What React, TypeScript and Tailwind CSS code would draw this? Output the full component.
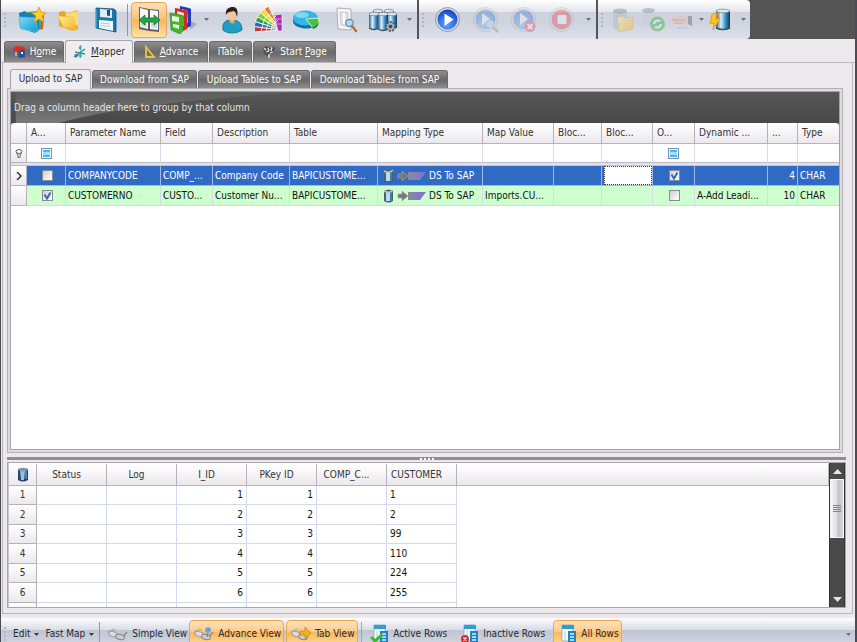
import React from 'react';

type P = { className?: string };

/* ---------- icons ---------- */

const Svg = ({ w = 28, h = 28, className = '', children }: { w?: number; h?: number; className?: string; children: React.ReactNode }) => (
  <svg width={w} height={h} viewBox={`0 0 ${w} ${h}`} className={`block shrink-0 ${className}`} aria-hidden="true">
    {children}
  </svg>
);

const Defs = () => (
  <svg width="0" height="0" className="absolute" aria-hidden="true">
    <defs>
      <linearGradient id="cyan" x1="0" y1="0" x2="1" y2="1">
        <stop offset="0" stopColor="#7be0f8" />
        <stop offset="1" stopColor="#1496cf" />
      </linearGradient>
      <linearGradient id="gold" x1="0" y1="0" x2="1" y2="1">
        <stop offset="0" stopColor="#fff0a0" />
        <stop offset="1" stopColor="#f3b018" />
      </linearGradient>
      <linearGradient id="steel" x1="0" y1="0" x2="1" y2="0">
        <stop offset="0" stopColor="#3b5f80" />
        <stop offset=".35" stopColor="#d8f0fa" />
        <stop offset=".7" stopColor="#2f8cc4" />
        <stop offset="1" stopColor="#14354f" />
      </linearGradient>
      <radialGradient id="ball" cx=".45" cy=".75" r=".7">
        <stop offset="0" stopColor="#5fa5ff" />
        <stop offset="1" stopColor="#164cc8" />
      </radialGradient>
      <linearGradient id="ramp" x1="0" y1="0" x2="1" y2="0">
        <stop offset="0" stopColor="#8c8a93" />
        <stop offset="1" stopColor="#7b70e0" />
      </linearGradient>
      <linearGradient id="shine" x1="0" y1="0" x2="0" y2="1">
        <stop offset="0" stopColor="#8a8a8a" stopOpacity=".15" />
        <stop offset="1" stopColor="#8a8a8a" stopOpacity=".75" />
      </linearGradient>
    </defs>
  </svg>
);

const NewFolder = () => (
  <Svg>
    <path d="M9 7l15-1 2 3-1 14-8 2z" fill="#d9542b" />
    <path d="M8 6l14-1 2 4-1 14-8 3z" fill="#5aa83a" />
    <path d="M1 7l6-2 2 2 12 1v15l-4 4L2 22z" fill="#1b7fb5" />
    <path d="M1 11l17 1 2 14-17-3z" fill="url(#cyan)" stroke="#58c4ea" strokeWidth=".7" />
    <path d="M21 1l2 5 5 1-4 3 2 6-5-3-5 3 2-6-4-3 5-1z" fill="#ffcf2e" stroke="#e99a10" strokeWidth=".8" />
  </Svg>
);
const Folder = () => (
  <Svg>
    <path d="M4 6l5-1 3 3 10-4 1 4v15l-5 2L4 20z" fill="#eda41f" />
    <path d="M10 8l13-3v14l-6 2z" fill="#fbdc6c" />
    <path d="M3 10l15 1 4 13-14-3z" fill="url(#gold)" stroke="#f0bd3a" strokeWidth=".7" />
  </Svg>
);
const Save = () => (
  <Svg>
    <path d="M4 2l18 1 2 2v21L4 22z" fill="#1878a8" stroke="#0e4f78" strokeWidth=".8" />
    <path d="M8 3l12 1v8L8 11z" fill="#dfeef5" />
    <path d="M15 4h3v6l-3-.5z" fill="#1c4f74" />
    <path d="M7 14l14 1v10L7 22z" fill="#f4f8fa" />
    <path d="M9 17l9 1M9 19.500l9 1" stroke="#a8b8c2" strokeWidth=".8" />
    <path d="M4 3v19" stroke="#67c5e5" strokeWidth="1" />
  </Svg>
);
const MapIcon = () => (
  <Svg>
    <path d="M4 1l10 2 10 1v22l-10-1-10-2z" fill="#5b6268" />
    <path d="M5 2l8 2v19l-8-2zM15 4l8 1v19l-8-1z" fill="#f6f7f7" />
    <path d="M6 15l6-2v8l-6-1zM16 14l6-2v10l-6-1z" fill="#cfd6d8" />
    <path d="M4 14l6-5v3h9V9l6 5-6 5v-3h-9v3z" fill="#27a544" stroke="#0d6b25" strokeWidth=".7" />
  </Svg>
);
const Books = () => (
  <Svg w={30}>
    <path d="M22 24l7-6-6-3z" fill="#8a93a5" opacity=".6" />
    <path d="M12 0l9 2 2 1v17l-4 2-8-4z" fill="#2438c8" />
    <path d="M14 3l6 2v12l-5-2z" fill="#e8ecfa" />
    <path d="M7 2l10 2 3 1-1 18-4 2-8-4z" fill="#d42b22" />
    <path d="M9 5l7 2v13l-6-2z" fill="#fbe6e2" />
    <path d="M2 7l11 2 3 1-1 15-3 3L3 24z" fill="#45b52b" stroke="#23791a" strokeWidth=".5" />
    <path d="M4 10l7 1v5l-7-1zM5 18l6 1v4l-6-2z" fill="#eafbe3" />
  </Svg>
);
const Person = () => (
  <Svg>
    <path d="M5 24c-1-8 3-10 8-10s11 1 11 10c-5 4-15 4-19 0z" fill="#1f9ec4" stroke="#0b6d91" strokeWidth=".8" />
    <path d="M11 13h6l-1 5-4-1z" fill="#e6a06a" />
    <ellipse cx="14" cy="8.500" rx="4.500" ry="6.500" fill="#f6c499" />
    <path d="M8 9C7 3 11 1 15 1c5 0 5 6 4 10-1-3-1-5-3-6-3 1-6 0-8 4z" fill="#27201c" />
  </Svg>
);

const fan = ['#c8372c', '#ea7a2c', '#f2d936', '#8acb35', '#2f9c52', '#2a62c0'];
const pivot = (r: number, deg: number) => {
  const a = (deg * Math.PI) / 180;
  return `${(26 + r * Math.cos(a)).toFixed(1)} ${(24 - r * Math.sin(a)).toFixed(1)}`;
};
const Palette = () => (
  <Svg>
    {fan.map((c, i) => {
      const a = 118 + i * 11;
      return (
        <path key={c} d={`M${pivot(4, a)}L${pivot(27, a)}L${pivot(27, a + 11)}L${pivot(4, a + 11)}z`} fill={fan[(i + 1) % 6]} stroke="#fff" strokeWidth=".8" />
      );
    })}
    <path d="M19 9l8-1v17h-4z" fill="#a42fb0" stroke="#fff" strokeWidth=".6" />
    {[10, 15, 20].map((r) => (
      <path key={r} d={`M${pivot(r, 108)}L${pivot(r, 146)}L${pivot(r, 184)}`} stroke="#fff" strokeWidth=".9" fill="none" opacity=".85" />
    ))}
    <path d="M19 13h8M20 18h7" stroke="#e8b5ee" strokeWidth=".8" />
  </Svg>
);
const Pie = () => (
  <Svg>
    <path d="M1 12v4c2 8 22 9 25 1v-4z" fill="#0e73a8" />
    <ellipse cx="13.500" cy="12" rx="12.500" ry="7.500" fill="#35b5e6" />
    <ellipse cx="10" cy="9" rx="7" ry="3" fill="#9be4fa" opacity=".7" />
    <path d="M14 13l12-1c2 4-1 8-6 9z" fill="#41c63c" stroke="#eafbe8" strokeWidth=".8" />
    <path d="M20 21c4-1 7-4 6.500-8v4c0 3-2 5-5.500 6z" fill="#1f8a25" />
  </Svg>
);
const DocSearch = () => (
  <Svg>
    <path d="M5 2l14 1v21L6 23z" fill="#f5f6f7" stroke="#a4a9ae" strokeWidth=".9" />
    <path d="M8 6l8 .5v14L9 19z" fill="#dfe2e5" stroke="#b9bec2" strokeWidth=".7" />
    <path d="M12 7v11" stroke="#fff" strokeWidth="2" />
    <circle cx="17.500" cy="17" r="3.700" fill="#a8d8f3" stroke="#6f8797" strokeWidth="1.200" />
    <path d="M20 20l4 5" stroke="#b5713a" strokeWidth="2.400" strokeLinecap="round" />
  </Svg>
);
const Can = ({ x, y, w, h }: { x: number; y: number; w: number; h: number }) => (
  <g>
    <rect x={x} y={y} width={w} height={h} rx="1.500" fill="url(#steel)" />
    <ellipse cx={x + w / 2} cy={y + 1} rx={w / 2} ry="1.800" fill="#dbe7ee" stroke="#5f7180" strokeWidth=".6" />
    <path d={`M${x} ${y + h - 1}q${w / 2} 3 ${w} 0`} stroke="#3c5165" strokeWidth="1.400" fill="none" />
  </g>
);
const Databases = () => (
  <Svg w={30}>
    <Can x={5} y={4} w={10} h={12} />
    <Can x={16} y={4} w={10} h={12} />
    <Can x={19} y={7} w={10} h={15} />
    <Can x={1} y={7} w={10} h={16} />
    <Can x={10} y={7} w={10} h={17} />
    <circle cx="22.500" cy="20.500" r="4.500" fill="#aab3b9" stroke="#4f5a61" strokeWidth="2" strokeDasharray="2 1.300" />
    <circle cx="22.500" cy="20.500" r="1.800" fill="#3c464d" />
  </Svg>
);
const Ring = ({ children, fill = 'url(#ball)' }: { children: React.ReactNode; fill?: string }) => (
  <>
    <circle cx="13.500" cy="13.500" r="12" fill="#d6d8de" stroke="#858b99" strokeWidth=".8" />
    <circle cx="13.500" cy="13.500" r="10" fill={fill} />
    {children}
  </>
);
const Play = () => (
  <Svg><Ring><path d="M10.500 7.500l9 6-9 6.500z" fill="#fff" /></Ring></Svg>
);
const PlaySearch = () => (
  <Svg className="opacity-30">
    <Ring><path d="M10 7l8 6-8 6z" fill="#fff" /></Ring>
    <circle cx="18" cy="18" r="4" fill="#9fdcf5" stroke="#5b9cb8" />
    <path d="M21 21l5 5" stroke="#b0683a" strokeWidth="2.500" />
  </Svg>
);
const PlayStop = () => (
  <Svg className="opacity-30">
    <Ring><path d="M10 7l8 6-8 6z" fill="#fff" /></Ring>
    <circle cx="20" cy="20.500" r="5.500" fill="#e51c2b" />
    <path d="M17.500 18l5 5m0-5l-5 5" stroke="#fff" strokeWidth="1.800" />
  </Svg>
);
const Stop = () => (
  <Svg className="opacity-30">
    <Ring fill="#e0242c"><rect x="9.500" y="9" width="9" height="9" rx="1" fill="#fff" /></Ring>
  </Svg>
);
const DimFolder = () => (
  <Svg className="opacity-45">
    <path d="M4 5l9-2 5 2v18l-8 2-6-3z" fill="#9cc0cf" />
    <ellipse cx="11" cy="5" rx="7" ry="2.500" fill="#7e8b95" />
    <path d="M8 11l6-1 2 2 8-1v12l-14 3z" fill="url(#gold)" stroke="#d9a63a" strokeWidth=".7" />
  </Svg>
);
const DimRefresh = () => (
  <Svg className="opacity-40">
    <rect x="4" y="4" width="11" height="16" rx="2" fill="#c3ccd8" />
    <ellipse cx="9.500" cy="4.500" rx="6.500" ry="2.500" fill="#77808c" />
    <circle cx="18.500" cy="18" r="7.500" fill="#2fae3c" />
    <path d="M15 18a4 4 0 016-3m1 3a4 4 0 01-6 3" stroke="#fff" strokeWidth="2" fill="none" />
  </Svg>
);
const DimHand = () => (
  <Svg className="opacity-40">
    <path d="M4 10h8l10 1v7l-9 1-8-2-1-3z" fill="#efbfa5" />
    <path d="M4 14h13M6 17h9" stroke="#a3705a" strokeWidth=".9" />
    <path d="M20 10h4v10l-4-2z" fill="#505a68" />
    <path d="M9 22h10" stroke="#9aa2b0" />
  </Svg>
);
const BoltDb = () => (
  <Svg>
    <Can x={9} y={4} w={14} h={19} />
    <path d="M5 8l5-1-1 6 4-1-7 12 1-7-4 1z" fill="#ffc326" stroke="#ef8f12" strokeWidth=".8" />
  </Svg>
);

const HomeIcon = () => (
  <Svg w={14} h={14}>
    <path d="M1 5l5-3 2 2v8l-6-1z" fill="#3a6cc4" />
    <path d="M6 5l5-1 2 3v5l-6 1z" fill="#2a4d9c" />
    <path d="M0 5l4-4 8 1 2 5-4-3-4 3z" fill="#dc2c20" />
    <path d="M3 7h2v4H3z" fill="#f4a434" />
    <path d="M9 7h2v2H9z" fill="#e8eefa" />
  </Svg>
);
const MapperIcon = () => (
  <Svg w={14} h={14}>
    <path d="M8 0c2 4-2 7 0 9s0 4-1 4c-3-3 2-6 0-8s-1-4 1-5z" fill="#39a4d8" />
    <path d="M1 12L12 4M2 7l10 2" stroke="#2b9c6a" strokeWidth="1.500" />
    <path d="M1 9l5 1-3 3z" fill="#3b6fc4" />
  </Svg>
);
const RulerIcon = () => (
  <Svg w={12} h={14}>
    <path d="M2 2v10h8z" fill="none" stroke="#f2c03c" strokeWidth="1.800" />
  </Svg>
);
const FlagIcon = () => (
  <Svg w={14} h={14}>
    <path d="M1 3l3-2 3 2 4-2 2 2-2 6-3-1-3 3-3-3z" fill="#4f4f4f" />
    <path d="M2 3l2 2M6 3l1 3M10 2l-1 4M4 7l3-1M8 8l3-1M7 9v4" stroke="#e8e8e8" strokeWidth="1.300" />
  </Svg>
);
const Glasses = ({ accent }: { accent?: 'pin' | 'arrow' }) => (
  <Svg w={22} h={16}>
    <path d="M1 6l6-3 2 2" stroke="#a6a6a6" fill="none" />
    <path d="M20 6l-4 5" stroke="#8f8f8f" strokeWidth="1.500" />
    <ellipse cx="6" cy="8" rx="4.500" ry="2.500" fill="#dcdce0" stroke="#949494" transform="rotate(20 6 8)" />
    <ellipse cx="13" cy="11" rx="4.500" ry="2.500" fill="#c9ccd2" stroke="#858585" transform="rotate(15 13 11)" />
    {accent === 'pin' && <><circle cx="15" cy="4" r="2.800" fill="#5ea3e6" /><path d="M15 7l-1 4" stroke="#5d7fa8" /></>}
    {accent === 'arrow' && <path d="M10 5h5V1l6 6-6 6V9h-5z" fill="#eeb01e" stroke="#b97d0c" strokeWidth=".6" />}
  </Svg>
);
const RowsIcon = ({ mark }: { mark?: 'check' | 'cross' }) => (
  <Svg w={20} h={22}>
    <path d="M4 2h11v16H4z" fill="#f6fafc" stroke="#8ea6b8" strokeWidth=".8" />
    <path d="M4 2h12v4H4z" fill="#2a9fd6" />
    <path d="M7 8v10" stroke="#b9cad4" />
    <path d="M10 8h8v13h-8z" fill="#1b86c4" />
    <path d="M12 11h4M12 14h4M12 17h4" stroke="#d6effb" strokeWidth="1.300" />
    {mark === 'check' && <path d="M1 14l4 4 7-6" stroke="#3cba2c" strokeWidth="3" fill="none" />}
    {mark === 'cross' && <><circle cx="5" cy="16" r="4" fill="#d92a2a" /><path d="M3.500 14.500l3 3m0-3l-3 3" stroke="#fff" strokeWidth="1.200" /></>}
  </Svg>
);
const DbSmall = () => (
  <Svg w={12} h={15}>
    <path d="M1 2h10v11q-5 3-10 0z" fill="#2f3f66" />
    <path d="M3 4h5l-1 9H4z" fill="#86c6ea" />
    <path d="M8 4h2v8H8z" fill="#5a7cb2" />
    <ellipse cx="6" cy="2.500" rx="5" ry="1.800" fill="#8590ac" />
  </Svg>
);
const MappingIcon = () => (
  <Svg w={43} h={15}>
    <path d="M1 3q5-3 9 0v10q-4 3-9 0z" fill="#4c6070" />
    <path d="M3 4h4v9H3z" fill="#b5dcf0" />
    <path d="M7 4h2v9H7z" fill="#3f7fae" />
    <path d="M1 3q5 3 9-1" stroke="#b8c2c8" fill="none" strokeWidth="1.500" />
    <path d="M15 6h4V3l6 5-6 5v-3h-4z" fill="#77777d" stroke="#a4a4ac" strokeWidth=".6" />
    <path d="M25 4h18l-6 8H25z" fill="url(#ramp)" />
  </Svg>
);
const Funnel = () => (
  <Svg w={8} h={9}>
    <ellipse cx="4" cy="2.500" rx="3" ry="2" fill="none" stroke="#666" />
    <path d="M1.500 4l1.500 2v3h2V6l1.500-2" fill="none" stroke="#666" />
  </Svg>
);
const Arrow = ({ className = 'text-[#3a3a3a]' }: P) => (
  <Svg w={5} h={3} className={className}><path d="M0 0h5L2.500 3z" fill="currentColor" /></Svg>
);

/* ---------- pieces ---------- */

const Grip = ({ className = '' }: P) => (
  <span className={`flex shrink-0 flex-col justify-center gap-[2px] ${className}`}>
    {[0, 1, 2, 3].map((i) => <i key={i} className="block size-[2px] bg-[#b3b7c3]" />)}
  </span>
);

const Tool = ({ label, children, className = 'w-[37px]' }: { label: string; children: React.ReactNode; className?: string }) => (
  <button type="button" aria-label={label} className={`flex h-[37px] shrink-0 items-center justify-center ${className}`}>{children}</button>
);

const More = ({ label, className = '' }: { label: string; className?: string }) => (
  <button type="button" aria-label={label} className={`flex h-[37px] shrink-0 items-center justify-center ${className}`}>
    <Arrow className="text-[#6c7387]" />
  </button>
);

const bar = 'bg-[linear-gradient(#ffffff_0,#e4e5ec_12px,#cdd2dd_12px,#cfd4df_60%,#dde1ea_100%)]';

function Toolbar() {
  return (
    <div className="flex h-[39px] shrink-0 bg-[#545454]">
      <div className={`flex rounded-r-sm ${bar}`}>
        <div className="flex items-center">
          <Grip className="w-3 pl-[3px]" />
          <Tool label="New"><NewFolder /></Tool>
          <Tool label="Open"><Folder /></Tool>
          <Tool label="Save"><Save /></Tool>
          <i className="mx-[3px] block h-8 w-px bg-[#8f94a1]" />
          <button type="button" aria-label="Mapping" className="flex h-9 w-9 shrink-0 items-center justify-center rounded-sm border border-[#eda353] bg-[linear-gradient(#fde0b4,#f9c37c_45%,#fbb45a_50%,#ffe3a8)]"><MapIcon /></button>
          <Tool label="Library" className="w-8"><Books /></Tool>
          <More label="Library options" className="w-3.5" />
          <Tool label="User"><Person /></Tool>
          <Tool label="Colours"><Palette /></Tool>
          <Tool label="Chart"><Pie /></Tool>
          <Tool label="Preview" className="w-10 pl-1"><DocSearch /></Tool>
          <Tool label="Data sources"><Databases /></Tool>
          <More label="More" className="w-4" />
        </div>
        <i className="block h-full w-[2px] bg-[#555559]" />
        <div className="flex items-center">
          <Grip className="w-2.5 pl-[3px]" />
          <Tool label="Run" className="w-[38px]"><Play /></Tool>
          <Tool label="Inspect run" className="w-[38px]"><PlaySearch /></Tool>
          <Tool label="Cancel run" className="w-[38px]"><PlayStop /></Tool>
          <Tool label="Stop" className="w-[38px]"><Stop /></Tool>
          <More label="Run options" className="w-[15px]" />
        </div>
        <i className="block h-full w-[2px] bg-[#555559]" />
        <div className="flex items-center">
          <Grip className="w-2.5 pl-[3px]" />
          <Tool label="Open data" className="w-[30px]"><DimFolder /></Tool>
          <Tool label="Refresh data" className="w-[30px]"><DimRefresh /></Tool>
          <Tool label="Share" className="w-7"><DimHand /></Tool>
          <More label="Share options" className="w-2.5" />
          <Tool label="Connect" className="w-[30px]"><BoltDb /></Tool>
          <More label="More data actions" className="w-[14px]" />
        </div>
      </div>
    </div>
  );
}

function Tab({ active, sub, children, className = '' }: { active?: boolean; sub?: boolean; children: React.ReactNode; className?: string }) {
  const size = sub ? 'h-[18px]' : 'h-[21px]';
  const look = active
    ? 'z-10 -mb-px border-[#a5a3a8] bg-[#f0edf1] text-[#2f2f2f] ' + (sub ? 'pb-px h-5' : 'pb-px h-[23px]')
    : `border-[#6b6b6b] bg-[linear-gradient(#8d8d8d,#6a6a6a_50%,#6d6d6d_60%,#8e8e8e)] text-white ${size}`;
  return (
    <button type="button" role="tab" aria-selected={!!active} className={`relative flex shrink-0 items-center justify-center gap-1 whitespace-nowrap rounded-t-[3px] border border-b-0 ${look} ${className}`}>
      {children}
    </button>
  );
}

function Check({ label, checked, filter }: { label: string; checked?: boolean; filter?: boolean }) {
  return (
    <span className="relative mx-auto block size-[11px]">
      <input type="checkbox" aria-label={label} defaultChecked={checked}
        className={`peer block size-[11px] appearance-none border ${filter ? 'border-[#6f93b5] bg-[#eef8ff]' : 'border-[#8a8a94] bg-[linear-gradient(135deg,#cfcfd4,#ffffff)]'}`} />
      {filter ? (
        <i className="pointer-events-none absolute inset-[2px] block border-y-2 border-[#4cb4f0] bg-[#a5dcfa]" />
      ) : (
        <svg viewBox="0 0 11 11" className="pointer-events-none absolute inset-0 hidden size-[11px] peer-checked:block" aria-hidden="true">
          <path d="M2.500 4.500l2.500 4 3.500-6" stroke="#2f6cc0" strokeWidth="2" fill="none" />
        </svg>
      )}
    </span>
  );
}

const cols: { name: string; w: string }[] = [
  { name: 'A...', w: 'w-[39px]' },
  { name: 'Parameter Name', w: 'w-[95px]' },
  { name: 'Field', w: 'w-[52px]' },
  { name: 'Description', w: 'w-[77px]' },
  { name: 'Table', w: 'w-[88px]' },
  { name: 'Mapping Type', w: 'w-[105px]' },
  { name: 'Map Value', w: 'w-[71px]' },
  { name: 'Bloc...', w: 'w-[48px]' },
  { name: 'Bloc...', w: 'w-[51px]' },
  { name: 'O...', w: 'w-[42px]' },
  { name: 'Dynamic ...', w: 'w-[73px]' },
  { name: '...', w: 'w-[30px]' },
  { name: 'Type', w: '' },
];

const head = 'bg-[linear-gradient(#ffffff,#ece8ed)] border-r border-b border-[#b5b2b8] font-normal text-[#333]';

const mapRows = [
  { on: false, name: 'COMPANYCODE', field: 'COMP_...', desc: 'Company Code', table: 'BAPICUSTOME...', value: '', opt: true, dyn: '', len: 4, type: 'CHAR' },
  { on: true, name: 'CUSTOMERNO', field: 'CUSTO...', desc: 'Customer Nu...', table: 'BAPICUSTOME...', value: 'Imports.CU...', opt: false, dyn: 'A-Add Leadi...', len: 10, type: 'CHAR' },
];

function MappingTable() {
  return (
    <table className="w-full table-fixed border-separate border-spacing-0">
      <colgroup>
        <col className="w-4" />
        {cols.map((c, i) => <col key={i} className={c.w} />)}
      </colgroup>
      <thead>
        <tr className="h-[21px]">
          <th className={`${head} rounded-tl-[3px]`} />
          {cols.map((c, i) => (
            <th key={i} className={`${head} overflow-hidden whitespace-nowrap pl-1 text-left last:rounded-tr-[3px] last:border-r-0`}>{c.name}</th>
          ))}
        </tr>
      </thead>
      <tbody>
        <tr className="h-[19px]">
          <td className={`${head} py-0`}><span className="flex justify-center"><Funnel /></span></td>
          {cols.map((c, i) => (
            <td key={i} className="border-r border-b border-[#d9dcea] border-b-[#bab8c4] bg-white py-0 last:border-r-0">
              {(i === 0 || i === 9) && <Check filter label={`Filter ${c.name}`} />}
            </td>
          ))}
        </tr>
        <tr className="h-[3px]"><td colSpan={14} className="border-b border-[#c3c1ca] bg-[#e3e1e9] p-0" /></tr>
        {mapRows.map((r, n) => {
          const cell = `overflow-hidden whitespace-nowrap border-r border-b py-0 pl-[2px] last:border-r-0 ${n === 0 ? 'border-[#9db8e6] border-b-[#9db8e6] bg-[#316ac5] text-white' : 'border-[#d5dbe4] bg-[#ceffce] text-[#111]'}`;
          return (
            <tr key={r.name} className="h-5">
              <td className={`${head} py-0`}>
                {n === 0 && <Svg w={6} h={8} className="mx-auto"><path d="M1 0l4 4-4 4" stroke="#333" strokeWidth="1.500" fill="none" /></Svg>}
              </td>
              <td className={cell}><Check label={`Active ${r.name}`} checked={r.on} /></td>
              <td className={cell}>{r.name}</td>
              <td className={cell}>{r.field}</td>
              <td className={cell}>{r.desc}</td>
              <td className={cell}>{r.table}</td>
              <td className={cell}><span className="flex items-center gap-[3px] pl-[3px]"><MappingIcon />DS To SAP</span></td>
              <td className={cell}>{r.value}</td>
              <td className={cell} />
              <td className={`${cell} pr-0 pl-0`}>
                {n === 0 && <input type="text" aria-label="Block value" className="block h-[19px] w-full border border-dotted border-[#333] bg-white px-1 text-[#111] outline-none" />}
              </td>
              <td className={cell}><Check label={`Optional ${r.name}`} checked={r.opt} /></td>
              <td className={cell}>{r.dyn}</td>
              <td className={`${cell} pr-[2px] text-right`}>{r.len}</td>
              <td className={cell}>{r.type}</td>
            </tr>
          );
        })}
      </tbody>
    </table>
  );
}

const dataRows: [number, string][] = [[1, '1'], [2, '2'], [3, '99'], [4, '110'], [5, '224'], [6, '255']];

function DataTable() {
  const cell = 'border-r border-b border-[#d3d9ec] py-0 px-[3px] text-[#111]';
  return (
    <table className="w-full table-fixed border-separate border-spacing-0">
      <colgroup>
        <col className="w-7" />
        {[0, 1, 2, 3, 4, 5].map((i) => <col key={i} className="w-[70px]" />)}
        <col />
      </colgroup>
      <thead>
        <tr className="h-[22px]">
          <th className={`${head} py-0`}><span className="flex justify-center"><DbSmall /></span></th>
          {['Status', 'Log', 'I_ID', 'PKey ID', 'COMP_C...', 'CUSTOMER'].map((h) => (
            <th key={h} className={`${head} whitespace-nowrap py-0 pr-2.5 pl-0 text-center`}>{h}</th>
          ))}
          <th className={head} />
        </tr>
      </thead>
      <tbody>
        {dataRows.map(([n, c]) => (
          <tr key={n} className="odd:h-[19px] even:h-5">
            <th className={`${head} py-0`}>{n}</th>
            <td className={cell} />
            <td className={cell} />
            <td className={`${cell} text-right`}>{n}</td>
            <td className={`${cell} text-right`}>{n}</td>
            <td className={cell} />
            <td className={cell}>{c}</td>
            <td />
          </tr>
        ))}
        <tr className="h-5">
          <th className={head} />
          {[0, 1, 2, 3, 4, 5].map((i) => <td key={i} className={cell} />)}
          <td />
        </tr>
      </tbody>
    </table>
  );
}

function ScrollBar() {
  return (
    <div className="flex w-4 shrink-0 flex-col border-x border-[#30353b] bg-[#4a4a4a]">
      <button type="button" aria-label="Scroll up" className="flex h-4 items-center justify-center">
        <Svg w={9} h={5}><path d="M0 5h9L4.500 0z" fill="#e6e6e6" /></Svg>
      </button>
      <div className="flex h-[59px] flex-col items-center justify-center gap-px border border-[#f6f6f8] bg-[linear-gradient(90deg,#f5f4f7,#dcdade_50%,#c4c2c9_60%,#d8d6dc)]">
        {[0, 1, 2, 3].map((i) => <i key={i} className="block h-px w-2 bg-[#85838a]" />)}
      </div>
      <button type="button" aria-label="Scroll down" className="mt-auto flex h-4 items-center justify-center">
        <Svg w={9} h={5}><path d="M0 0h9L4.500 5z" fill="#e6e6e6" /></Svg>
      </button>
    </div>
  );
}

function BottomButton({ on, icon, children, className = '' }: { on?: boolean; icon: React.ReactNode; children: React.ReactNode; className?: string }) {
  return (
    <button type="button" aria-pressed={!!on}
      className={`flex h-7 shrink-0 items-center gap-[3px] whitespace-nowrap rounded-sm border ${on ? 'border-[#f0a54c] bg-[linear-gradient(#fee3bd,#fccb8a_40%,#fdb75d_45%,#ffdf9e)]' : 'border-transparent'} ${className}`}>
      {icon}{children}
    </button>
  );
}

function BottomBar() {
  return (
    <div className="h-6 shrink-0 overflow-hidden bg-[linear-gradient(#fdfdfe_0,#dadce5_12px,#bfc5d2_12px,#ced3de_24px)] pt-[2px] text-[#262a33]">
      <div className="flex h-7 items-center">
        <Grip className="w-[9px] pl-[3px]" />
        <button type="button" className="flex items-center gap-1 px-[3px]">Edit<Arrow /></button>
        <button type="button" className="flex items-center gap-1 px-[3px]">Fast Map<Arrow /></button>
        <i className="mx-[2px] block h-6 w-px shrink-0 bg-[#9398a5]" />
        <BottomButton icon={<Glasses />} className="w-[87px] pl-1">Simple View</BottomButton>
        <BottomButton on icon={<Glasses accent="pin" />} className="w-[95px] pl-[3px]">Advance View</BottomButton>
        <BottomButton on icon={<Glasses accent="arrow" />} className="ml-[2px] w-[72px] pl-[3px]">Tab View</BottomButton>
        <i className="mx-[3px] block h-6 w-px shrink-0 bg-[#9fa4b0]" />
        <BottomButton icon={<RowsIcon mark="check" />} className="w-[90px] pl-1">Active Rows</BottomButton>
        <BottomButton icon={<RowsIcon mark="cross" />} className="w-[98px] pl-1">Inactive Rows</BottomButton>
        <BottomButton on icon={<RowsIcon />} className="w-[69px] pl-1">All Rows</BottomButton>
        <button type="button" aria-label="Toolbar options" className="ml-auto px-1"><Arrow className="text-[#6c7387]" /></button>
      </div>
    </div>
  );
}

export default function App() {
  return (
    <div className="flex h-screen flex-col overflow-hidden border-r-2 border-l border-[#4c4b54] bg-[#ece8ec] font-['DejaVu_Sans_Condensed','DejaVu_Sans',sans-serif] text-[10px] leading-3">
      <Defs />
      <Toolbar />
      <div role="tablist" aria-label="Workspace" className="mt-px flex shrink-0 items-end gap-px border-b border-[#b9b6bc] px-[3px]">
        <Tab className="w-[60px]"><HomeIcon /><span>H<u>o</u>me</span></Tab>
        <Tab active className="w-[68px]"><MapperIcon /><span><u>M</u>apper</span></Tab>
        <Tab className="w-[74px]"><RulerIcon /><span><u>A</u>dvance</span></Tab>
        <Tab className="w-[43px]">iTable</Tab>
        <Tab className="w-[83px]"><FlagIcon /><span>Start <u>P</u>age</span></Tab>
      </div>
      <main className="mr-[2px] mb-1 ml-px flex min-h-0 flex-1 flex-col border-x border-b border-[#b9b6bc] pt-1.5 pr-1.5 pb-[5px] pl-1">
        <div role="tablist" aria-label="Transfer" className="flex shrink-0 items-end gap-px px-[3px]">
          <Tab sub active className="w-[81px]">Upload to SAP</Tab>
          <Tab sub className="w-[105px]">Download from SAP</Tab>
          <Tab sub className="w-[112px]">Upload Tables to SAP</Tab>
          <Tab sub className="w-[137px]">Download Tables from SAP</Tab>
        </div>
        <section className="mr-[3px] flex min-h-0 flex-1 flex-col border border-[#b3b1b6] bg-[#dddbdf] p-[2px]">
          <div className="flex min-h-0 flex-1 flex-col border border-[#a5a3a8] bg-white">
            <div className="relative flex h-[31px] shrink-0 items-center bg-[linear-gradient(#565656,#484848)] px-[3px] text-[#e6e6e6]">
              <svg className="absolute inset-y-0 left-0 h-full w-[300px]" viewBox="0 0 300 32" aria-hidden="true">
                <path d="M0 0h290C190 8 110 14 45 32H0z" fill="url(#shine)" />
              </svg>
              <span className="relative">Drag a column header here to group by that column</span>
            </div>
            <div className="bg-[#484848]"><MappingTable /></div>
          </div>
        </section>
        <div className="mt-1 flex h-[3px] shrink-0 items-center justify-center gap-[2px] bg-[#8f8d92]">
          {[0, 1, 2, 3].map((i) => <i key={i} className="block size-[2px] bg-white" />)}
        </div>
        <section className="mt-[2px] flex h-[146px] shrink-0 overflow-hidden border border-[#a9a7ac] bg-white">
          <div className="min-w-0 flex-1 border-l border-[#c9c7cc] pt-px"><DataTable /></div>
          <ScrollBar />
        </section>
      </main>
      <BottomBar />
    </div>
  );
}
